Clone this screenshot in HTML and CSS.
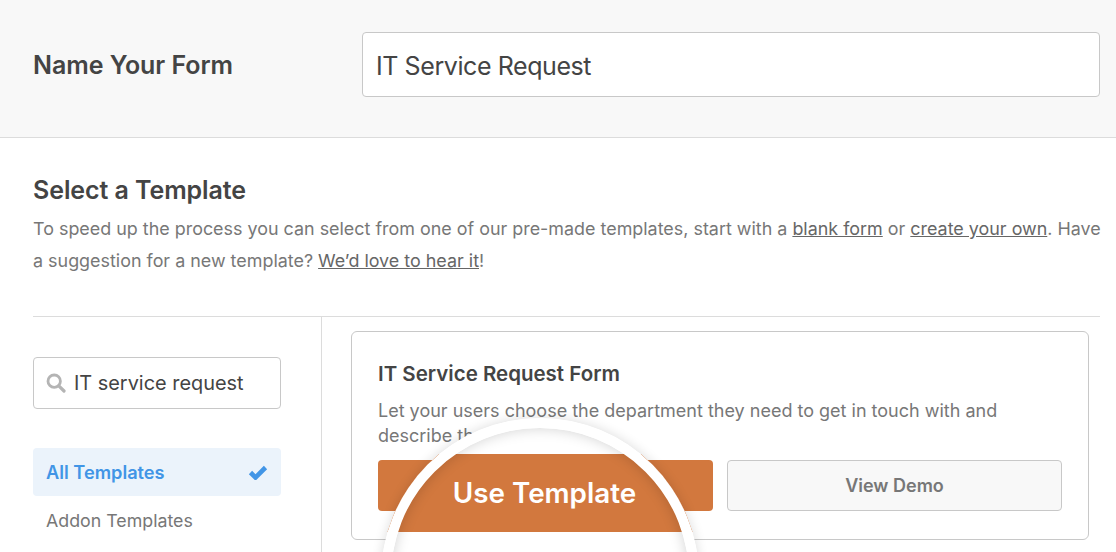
FILE: index.html
```html
<!DOCTYPE html>
<html lang="en">
<head>
<meta charset="utf-8">
<title>Select a Template</title>
<link rel="stylesheet" href="styles.css">
</head>
<body>
<header class="name-bar">
  <h1 class="name-label">Name Your Form</h1>
  <div class="name-input">IT Service Request</div>
</header>
<main class="content">
  <h2 class="section-title">Select a Template</h2>
  <p class="intro">To speed up the process you can select from one of our pre-made templates, start with a <a>blank form</a> or <a>create your own</a>. Have a suggestion for a new template? <a>We’d love to hear it</a>!</p>
  <div class="picker">
    <aside class="sidebar">
      <div class="search">
        <svg class="search-icon" viewBox="0 0 20 20" width="20" height="20"><circle cx="8.2" cy="8.2" r="6.2" fill="none" stroke="#b4b4b4" stroke-width="2.8"/><path d="M12.8 12.8 18 18" stroke="#b4b4b4" stroke-width="3.2" stroke-linecap="round"/></svg>
        <span>IT service request</span>
      </div>
      <div class="cat cat-active">
        <span>All Templates</span>
        <svg viewBox="0 0 20 16" width="20" height="16"><path d="M2.5 8.5 7.5 13.5 17.5 3.5" fill="none" stroke="#4195e6" stroke-width="4.6"/></svg>
      </div>
      <div class="cat">Addon Templates</div>
    </aside>
    <section class="results">
      <article class="card">
        <h3 class="card-title">IT Service Request Form</h3>
        <p class="card-desc">Let your users choose the department they need to get in touch with and describe their issue.</p>
        <div class="card-actions">
          <div class="btn btn-use"></div>
          <div class="btn btn-demo">View Demo</div>
        </div>
      </article>
    </section>
  </div>
</main>
<div class="lens">
  <div class="lens-band">Use Template</div>
</div>
</body>
</html>
```
FILE: styles.css
```css
* { box-sizing: border-box; }
html, body { margin: 0; height: 552px; overflow: hidden; }
body { background: #fff; font-family: Inter, "Liberation Sans", sans-serif; color: #444; position: relative; }
.name-bar { height: 138px; background: #f8f8f8; border-bottom: 1px solid #dcdcdc; padding: 32px 16px 0 33px; display: flex; }
.name-label { width: 329px; margin: 0; font-size: 25px; font-weight: 600; line-height: 66px; letter-spacing: -0.06px; color: #444; }
.name-input { width: 738px; height: 65px; background: #fff; border: 1px solid #c8c8c8; border-radius: 4px; padding: 0 13px; font-size: 25px; line-height: 66px; letter-spacing: -0.42px; color: #444; }
.content { padding: 0 16px 0 33px; height: 414px; overflow: hidden; }
.section-title { margin: 0; padding-top: 36px; font-size: 25px; font-weight: 600; line-height: 32px; letter-spacing: -0.08px; color: #444; }
.intro { margin: 7px -5px 0 0; height: 103px; font-size: 17.92px; line-height: 32px; color: #777; }
.intro a { color: #666; text-decoration: underline; }
.picker { display: flex; border-top: 1px solid #dcdcdc; height: 236px; }
.sidebar { width: 289px; border-right: 1px solid #dcdcdc; padding-top: 40px; flex: none; }
.search { width: 248px; height: 52px; border: 1px solid #c8c8c8; border-radius: 4px; display: flex; align-items: center; padding-left: 12px; gap: 8px; font-size: 19.9px; color: #444; }
.search-icon { flex: none; }
.cat { width: 248px; height: 48px; padding: 0 13px; display: flex; align-items: center; justify-content: space-between; font-size: 17.8px; color: #777; }
.cat-active { margin-top: 39px; background: #ebf3fb; border-radius: 4px; color: #4195e6; font-size: 18.2px; font-weight: 600; padding-bottom: 1px; }
.results { flex: 1; padding: 14px 11px 0 29px; }
.card { width: 738px; height: 209px; border: 1px solid #c8c8c8; border-radius: 6px; padding: 28px 26px 0; }
.card-title { margin: 0; font-size: 20.5px; font-weight: 600; line-height: 28px; color: #444; }
.card-desc { margin: 11px 0 0; font-size: 18px; line-height: 24.5px; color: #777; height: 50px; overflow: hidden; }
.card-actions { display: flex; gap: 14px; margin-top: 11px; }
.btn { width: 335px; height: 51px; border-radius: 4px; }
.btn-use { background: #d2783e; }
.btn-demo { background: #f8f8f8; border: 1px solid #c8c8c8; font-size: 18px; font-weight: 600; line-height: 49px; text-align: center; color: #777; }
.lens { position: absolute; left: 381px; top: 418px; width: 318px; height: 318px; border-radius: 50%; background: #fff; overflow: hidden; box-shadow: 0 0 12px rgba(0,0,0,.14); }
.lens-band { position: absolute; left: 0; top: 36px; width: 100%; height: 78px; background: #d2783e; color: #fff; font-size: 27.8px; font-weight: 600; line-height: 79px; text-align: center; padding-left: 9px; }
.lens::after { content: ""; position: absolute; inset: 10px; border-radius: 50%; box-shadow: inset 0 0 14px rgba(0,0,0,.18); }
.lens::before { content: ""; position: absolute; inset: 0; border-radius: 50%; border: 10px solid #fff; z-index: 1; }
```
